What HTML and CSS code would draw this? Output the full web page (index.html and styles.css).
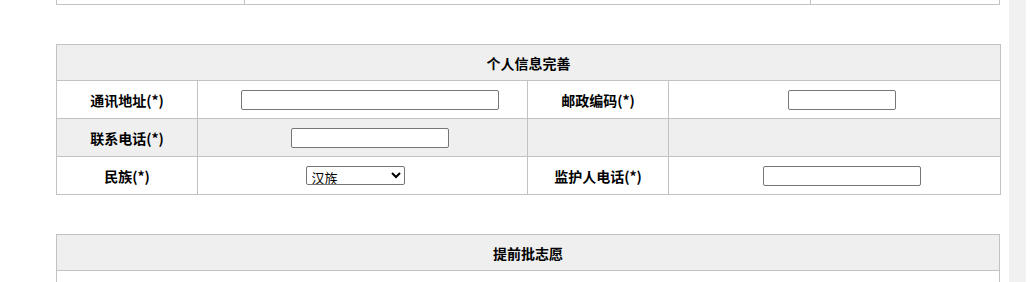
FILE: index.html
```html
<!DOCTYPE html>
<html lang="zh-CN">
<head>
  <meta charset="UTF-8" />
  <title>个人信息完善</title>
  <link rel="stylesheet" href="styles.css">
</head>
<body>
  <div class="page">
    <div class="content">
      <div class="prev">
        <div class="p1"></div>
        <div class="p2"></div>
        <div class="p3"></div>
      </div>

      <table class="info">
        <colgroup>
          <col class="c-label" />
          <col class="c-field" />
          <col class="c-label" />
          <col class="c-last" />
        </colgroup>
        <tr class="head">
          <th colspan="4">个人信息完善</th>
        </tr>
        <tr>
          <td class="label">通讯地址(*)</td>
          <td><input type="text" class="w-long" /></td>
          <td class="label">邮政编码(*)</td>
          <td><input type="text" class="w-short" /></td>
        </tr>
        <tr class="alt">
          <td class="label">联系电话(*)</td>
          <td><input type="text" class="w-mid" /></td>
          <td class="label"></td>
          <td></td>
        </tr>
        <tr>
          <td class="label">民族(*)</td>
          <td>
            <select class="nation">
              <option>汉族</option>
              <option>蒙古族</option>
              <option>回族</option>
            </select>
          </td>
          <td class="label">监护人电话(*)</td>
          <td><input type="text" class="w-mid" /></td>
        </tr>
      </table>

      <table class="info">
        <tr class="head">
          <th>提前批志愿</th>
        </tr>
        <tr>
          <td class="empty"></td>
        </tr>
      </table>
    </div>
    <div class="scroll-strip"></div>
  </div>
</body>
</html>
```

FILE: styles.css
```css
body {
  margin: 0;
  font-family: "Noto Sans CJK SC", "DejaVu Sans", sans-serif;
  font-size: 14px;
  color: #000;
  background: #fff;
  overflow: hidden;
}

.page {
  display: flex;
  height: 282px;
}

.content {
  width: 944px;
  padding-left: 56px;
  padding-right: 9px;
}

.scroll-strip {
  width: 17px;
  background: #f1f1f1;
}

/* tail of the table above, cut by the viewport */
.prev {
  display: flex;
  height: 5px;
  box-sizing: border-box;
  border: 1px solid #c2c2c2;
  border-top: none;
}

.prev div {
  border-right: 1px solid #c2c2c2;
}

.prev .p1 { width: 187px; }
.prev .p2 { width: 565px; }
.prev .p3 { flex: 1; border-right: none; }

.info {
  width: 944px;
  border-collapse: collapse;
  table-layout: fixed;
  margin-top: 39px;
}

.info td,
.info th {
  border: 1px solid #c2c2c2;
  text-align: center;
  padding: 0;
}

.c-label { width: 141px; }
.c-field { width: 330px; }
.c-last { width: 332px; }

.head th {
  height: 35px;
  background: #efefef;
  font-weight: bold;
}

.info tr td {
  height: 37px;
  line-height: 16px;
}

.alt td {
  background: #efefef;
}

.label {
  font-weight: bold;
}

.info input {
  height: 20px;
  box-sizing: border-box;
  border: 1px solid #767676;
  border-radius: 2px;
  padding: 1px 2px;
  margin-left: 15px;
  background: #fff;
  vertical-align: middle;
}

.w-long { width: 258px; }
.w-short { width: 108px; }
.w-mid { width: 158px; }

.nation {
  width: 99px;
  height: 19px;
  box-sizing: border-box;
  margin-right: 15px;
  font-family: "Noto Sans CJK SC", sans-serif;
  font-size: 13px;
  line-height: 13px;
  padding: 0 0 0 1px;
  border: 1px solid #767676;
  border-radius: 2px;
  background: #fff;
  vertical-align: middle;
}

.info .empty {
  height: 20px;
}
```
